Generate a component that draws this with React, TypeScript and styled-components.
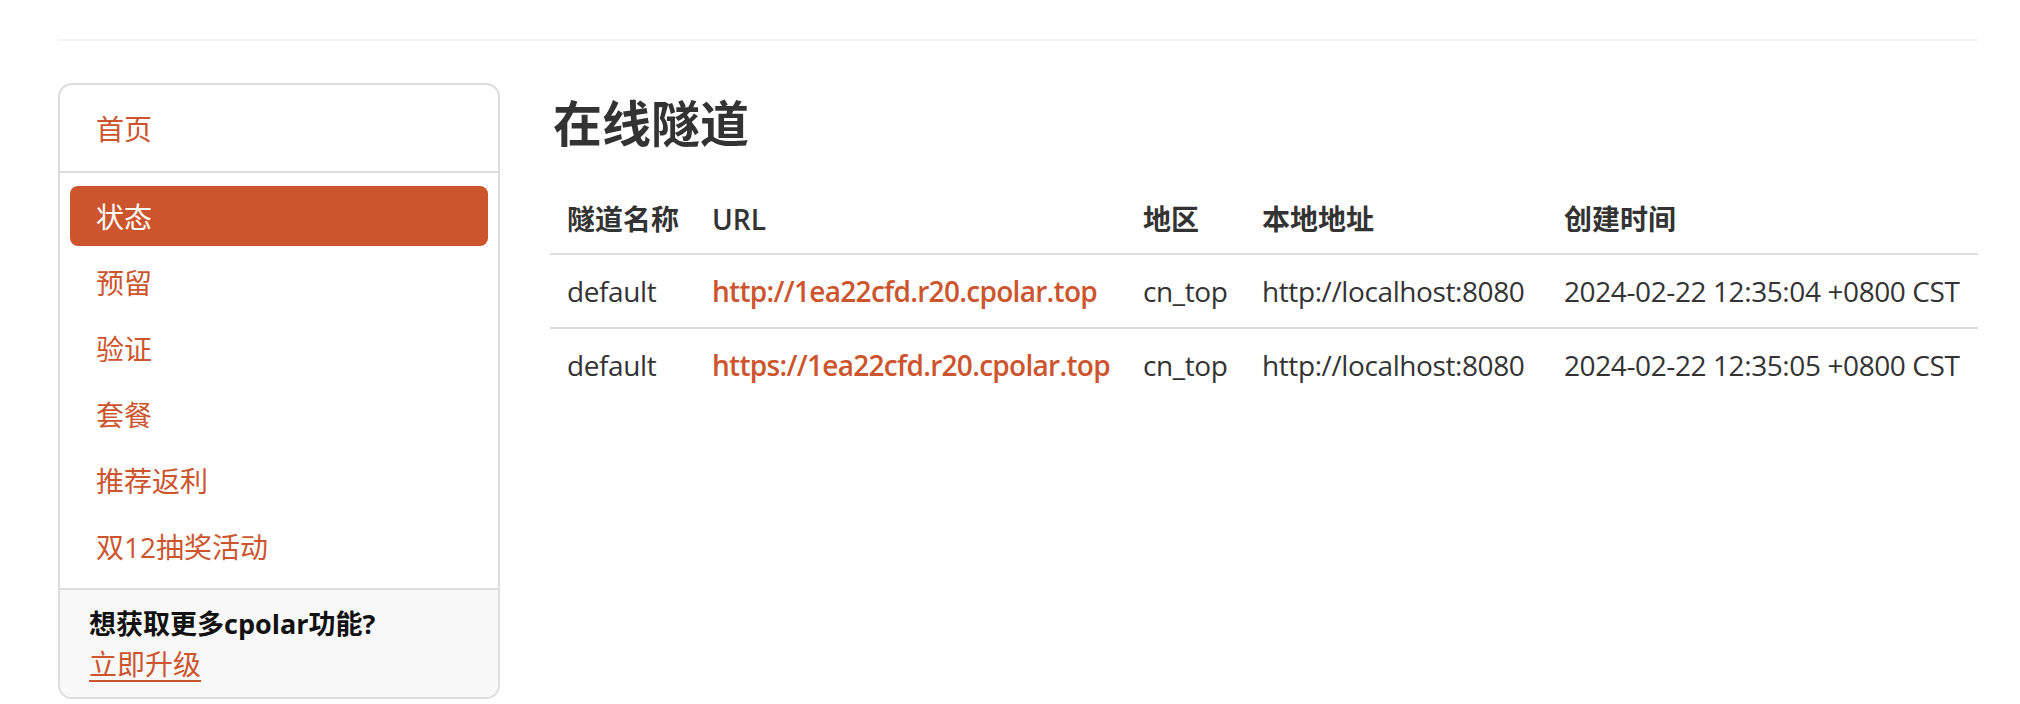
import React from "react";
import styled, { createGlobalStyle } from "styled-components";

const ORANGE = "#cd552e";

const GlobalStyle = createGlobalStyle`
  html, body {
    margin: 0;
    padding: 0;
    background: #ffffff;
  }
  body {
    font-family: "Open Sans", "Noto Sans CJK SC", sans-serif;
    color: #333333;
    font-size: 28px;
  }
  * { box-sizing: border-box; }
`;

const Page = styled.div`
  padding: 39px 43px 0 58px;
`;

const TopRule = styled.div`
  height: 2px;
  background: #f3f3f3;
`;

const Main = styled.div`
  display: flex;
  align-items: flex-start;
  gap: 50px;
  margin-top: 42px;
`;

const Sidebar = styled.aside`
  width: 442px;
  flex: 0 0 442px;
  border: 2px solid #dddddd;
  border-radius: 14px;
  overflow: hidden;
  background: #ffffff;
`;

const NavSection = styled.nav<{ $divided?: boolean }>`
  display: flex;
  flex-direction: column;
  gap: 6px;
  padding: 13px 10px ${(p) => (p.$divided ? "12px" : "13px")};
  border-top: ${(p) => (p.$divided ? "2px solid #dddddd" : "none")};
`;

const NavItem = styled.a<{ $active?: boolean }>`
  display: flex;
  align-items: center;
  height: 60px;
  padding-left: 26px;
  border-radius: 8px;
  font-size: 28px;
  text-decoration: none;
  cursor: pointer;
  color: ${(p) => (p.$active ? "#ffffff" : ORANGE)};
  background: ${(p) => (p.$active ? ORANGE : "transparent")};
`;

const Footer = styled.div`
  border-top: 2px solid #dddddd;
  background: #f8f8f8;
  padding: 14px 29px 13px;
  line-height: 40px;
`;

const FooterTitle = styled.div`
  font-weight: 700;
  color: #111111;
  font-size: 27px;
`;

const UpgradeLink = styled.a`
  color: ${ORANGE};
  text-decoration: underline;
  text-underline-offset: 5px;
  font-size: 28px;
  cursor: pointer;
`;

const Content = styled.section`
  flex: 1;
  min-width: 0;
`;

const Title = styled.h2`
  margin: 11px 0 0 3px;
  font-size: 49px;
  line-height: 58px;
  font-weight: 700;
  color: #333333;
`;

const Table = styled.table`
  margin-top: 31px;
  width: 100%;
  border-collapse: collapse;
  table-layout: fixed;
`;

const HeadCell = styled.th`
  text-align: left;
  font-weight: 600;
  font-size: 28px;
  line-height: 40px;
  color: #333333;
  padding: 16px 17px 14px;
  border-bottom: 2px solid #dddddd;
  white-space: nowrap;
`;

const Row = styled.tr<{ $first?: boolean }>`
  & > td {
    border-top: ${(p) => (p.$first ? "none" : "2px solid #dddddd")};
  }
`;

const Cell = styled.td`
  font-size: 28px;
  line-height: 40px;
  color: #333333;
  padding: 16px 17px;
  white-space: nowrap;
  letter-spacing: -0.4px;
`;

const UrlLink = styled.a`
  color: ${ORANGE};
  font-weight: 600;
  letter-spacing: -0.7px;
  text-decoration: none;
  cursor: pointer;
`;

const menu = ["状态", "预留", "验证", "套餐", "推荐返利", "双12抽奖活动"];

const tunnels = [
  {
    name: "default",
    url: "http://1ea22cfd.r20.cpolar.top",
    region: "cn_top",
    local: "http://localhost:8080",
    created: "2024-02-22 12:35:04 +0800 CST",
  },
  {
    name: "default",
    url: "https://1ea22cfd.r20.cpolar.top",
    region: "cn_top",
    local: "http://localhost:8080",
    created: "2024-02-22 12:35:05 +0800 CST",
  },
];

const columns = [
  { label: "隧道名称", width: 145 },
  { label: "URL", width: 431 },
  { label: "地区", width: 119 },
  { label: "本地地址", width: 302 },
  { label: "创建时间", width: 431 },
];

export default function App() {
  return (
    <>
      <GlobalStyle />
      <Page>
        <TopRule />
        <Main>
          <Sidebar>
            <NavSection>
              <NavItem>首页</NavItem>
            </NavSection>
            <NavSection $divided>
              {menu.map((m, i) => (
                <NavItem key={m} $active={i === 0}>
                  {m}
                </NavItem>
              ))}
            </NavSection>
            <Footer>
              <FooterTitle>想获取更多cpolar功能?</FooterTitle>
              <UpgradeLink>立即升级</UpgradeLink>
            </Footer>
          </Sidebar>
          <Content>
            <Title>在线隧道</Title>
            <Table>
              <colgroup>
                {columns.map((c) => (
                  <col key={c.label} style={{ width: c.width }} />
                ))}
              </colgroup>
              <thead>
                <tr>
                  {columns.map((c) => (
                    <HeadCell key={c.label}>{c.label}</HeadCell>
                  ))}
                </tr>
              </thead>
              <tbody>
                {tunnels.map((t, i) => (
                  <Row key={t.url} $first={i === 0}>
                    <Cell>{t.name}</Cell>
                    <Cell>
                      <UrlLink>{t.url}</UrlLink>
                    </Cell>
                    <Cell>{t.region}</Cell>
                    <Cell>{t.local}</Cell>
                    <Cell>{t.created}</Cell>
                  </Row>
                ))}
              </tbody>
            </Table>
          </Content>
        </Main>
      </Page>
    </>
  );
}
